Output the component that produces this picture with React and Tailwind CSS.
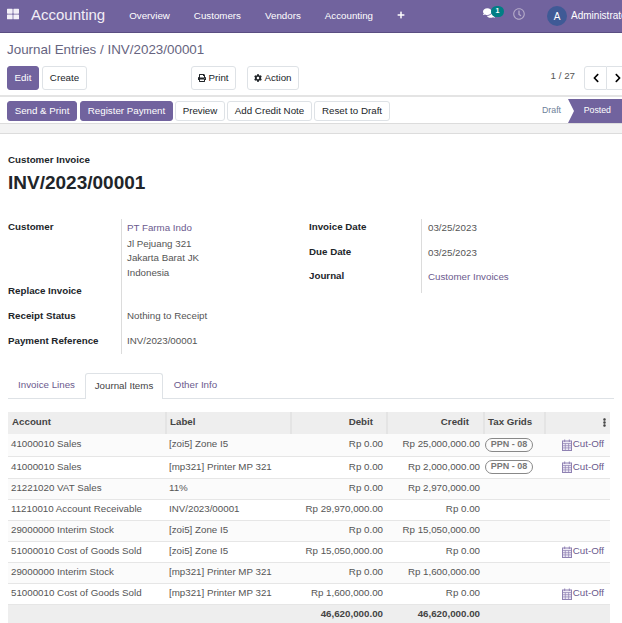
import React from "react";
import { FaPrint, FaCog, FaComments, FaRegClock, FaPlus, FaThLarge, FaChevronLeft, FaChevronRight, FaEllipsisV } from "react-icons/fa";

const Btn = ({ children, primary, className = "" }) => (
  <button className={`flex items-center justify-center shrink-0 whitespace-nowrap rounded-[3px] border text-[9.75px] ${primary ? "bg-[#71639e] border-[#71639e] text-white" : "bg-white border-[#dee2e6] text-[#212529]"} ${className}`}>
    {children}
  </button>
);

const Cal = () => (
  <svg viewBox="0 0 10 12" className="w-[10px] h-[12px] mr-[1px] shrink-0" fill="none" stroke="#8f82b3" strokeWidth="1">
    <rect x="0.5" y="2" width="9" height="9.5" fill="#eeeaf5" />
    <path d="M0 4.5h10M0 6.7h10M0 8.9h10M3.3 4.5v7M6.6 4.5v7" strokeWidth="0.7" />
    <path d="M2.7 0.5v2.5M7.3 0.5v2.5" />
  </svg>
);

const rows = [
  ["41000010 Sales", "[zoi5] Zone I5", "Rp 0.00", "Rp 25,000,000.00", true, true, "h-[22px]"],
  ["41000010 Sales", "[mp321] Printer MP 321", "Rp 0.00", "Rp 2,000,000.00", true, true, "h-[22px]"],
  ["21221020 VAT Sales", "11%", "Rp 0.00", "Rp 2,970,000.00", false, false, "h-[21px]"],
  ["11210010 Account Receivable", "INV/2023/00001", "Rp 29,970,000.00", "Rp 0.00", false, false, "h-[21px]"],
  ["29000000 Interim Stock", "[zoi5] Zone I5", "Rp 0.00", "Rp 15,050,000.00", false, false, "h-[21px]"],
  ["51000010 Cost of Goods Sold", "[zoi5] Zone I5", "Rp 15,050,000.00", "Rp 0.00", false, true, "h-[21px]"],
  ["29000000 Interim Stock", "[mp321] Printer MP 321", "Rp 0.00", "Rp 1,600,000.00", false, false, "h-[21px]"],
  ["51000010 Cost of Goods Sold", "[mp321] Printer MP 321", "Rp 1,600,000.00", "Rp 0.00", false, true, "h-[21px]"],
];

const Label = ({ children, className = "" }) => (
  <div className={`font-bold text-[9.75px] text-[#212529] ${className}`}>{children}</div>
);

export default function App() {
  return (
    <div className="w-[622px] h-[623px] overflow-hidden bg-white text-[9.75px] text-[#4c4c4c] [font-family:Liberation_Sans,Arial,sans-serif]">
      <nav className="h-[33px] bg-[#71639e] border-b border-[#5a4e82] flex items-center text-white whitespace-nowrap">
        <FaThLarge className="ml-[7px] mb-[5px] w-[12px] h-[12px] shrink-0 text-[#f3f0f8]" />
        <span className="ml-[12px] mb-[1px] text-[15px] text-[#f1eef6]">Accounting</span>
        <span className="ml-[24px] text-[9.75px]">Overview</span>
        <span className="ml-[24px] text-[9.75px]">Customers</span>
        <span className="ml-[24px] text-[9.75px]">Vendors</span>
        <span className="ml-[24px] text-[9.75px]">Accounting</span>
        <FaPlus className="ml-[24px] mb-[3px] w-[8px] h-[8px] shrink-0" />
        <div className="relative ml-[78px] mb-[6px] shrink-0">
          <FaComments className="w-[12px] h-[12px]" />
          <span className="absolute left-[8px] top-[-1px] w-[13px] h-[11px] rounded-full bg-[#017e84] text-[7px] font-bold flex items-center justify-center">1</span>
        </div>
        <FaRegClock className="ml-[18px] mb-[5px] w-[12px] h-[12px] shrink-0 text-[#b5abc9]" />
        <span className="ml-[22px] w-[20px] h-[20px] shrink-0 rounded-full bg-[#3f5a96] flex items-center justify-center text-[10px]">A</span>
        <span className="ml-[4px] mb-[2px] text-[10px] whitespace-nowrap">Administrator</span>
      </nav>

      <div className="h-[64px] px-[7px] border-b-2 border-[#e4e4e4]">
        <div className="h-[33px] flex items-center text-[13.4px] leading-none text-[#666480]">Journal Entries / INV/2023/00001</div>
        <div className="flex items-center">
          <Btn primary className="w-[32px] h-[24px]">Edit</Btn>
          <Btn className="ml-[3px] w-[45px] h-[24px]">Create</Btn>
          <Btn className="ml-[104px] w-[45px] h-[24px] gap-[2px]"><FaPrint className="w-[8px] h-[8px]" />Print</Btn>
          <Btn className="ml-[11px] w-[52px] h-[24px] gap-[2px]"><FaCog className="w-[8px] h-[8px]" />Action</Btn>
          <span className="ml-auto mr-[9px] mb-[3px] text-[9.75px] text-[#555]">1 / 27</span>
          <div className="flex mr-[-15px]">
            <Btn className="w-[23px] h-[24px] rounded-r-none"><FaChevronLeft className="w-[10px] h-[10px] text-black" /></Btn>
            <Btn className="w-[23px] h-[24px] rounded-l-none border-l-0"><FaChevronRight className="w-[10px] h-[10px] text-black" /></Btn>
          </div>
        </div>
      </div>

      <div className="h-[27px] pt-[2px] pl-[7px] flex items-center border-b border-[#dcdcdc]">
        <Btn primary className="w-[70px] h-[20px]">Send &amp; Print</Btn>
        <Btn primary className="ml-[3px] w-[93px] h-[20px]">Register Payment</Btn>
        <Btn className="ml-[2px] w-[50px] h-[20px]">Preview</Btn>
        <Btn className="ml-[2px] w-[85px] h-[20px]">Add Credit Note</Btn>
        <Btn className="ml-[2px] w-[76px] h-[20px]">Reset to Draft</Btn>
        <span className="ml-auto mr-[7px] text-[8.75px] text-[#6d7f99]">Draft</span>
        <div className="w-[54px] h-[24px] bg-[#71639e] text-white text-[8.75px] flex items-center justify-end pr-[11px] [clip-path:polygon(0_0,100%_0,100%_100%,0_100%,6px_50%)]">Posted</div>
      </div>

      <div className="h-[10px] bg-[#f3f3f3] border-b border-[#dcdcdc]" />

      <div className="px-[8px]">
        <Label className="mt-[19px] leading-[13px]">Customer Invoice</Label>
        <h1 className="mt-[5px] text-[19px] leading-[24px] font-bold text-[#212529]">INV/2023/00001</h1>

        <div className="mt-[24px] flex">
          <div className="w-[113px] shrink-0">
            <Label className="h-[64px] leading-[15px]">Customer</Label>
            <Label className="h-[25px] leading-[15px]">Replace Invoice</Label>
            <Label className="h-[25px] leading-[15px]">Receipt Status</Label>
            <Label className="h-[25px] leading-[15px]">Payment Reference</Label>
          </div>
          <div className="w-[188px] shrink-0 h-[135px] border-l border-[#dcdcdc] pl-[5px] text-[#555]">
            <div className="leading-[15px] pt-[1px] text-[#6b5a8e]">PT Farma Indo</div>
            <div className="leading-[15px] mt-[1px]">Jl Pejuang 321</div>
            <div className="leading-[14px]">Jakarta Barat JK</div>
            <div className="leading-[15px]">Indonesia</div>
            <div className="mt-[28px] leading-[15px]">Nothing to Receipt</div>
            <div className="mt-[10px] leading-[15px]">INV/2023/00001</div>
          </div>
          <div className="w-[112px] shrink-0">
            <Label className="h-[25px] leading-[15px]">Invoice Date</Label>
            <Label className="h-[24px] leading-[15px]">Due Date</Label>
            <Label className="leading-[15px]">Journal</Label>
          </div>
          <div className="h-[74px] border-l border-[#dcdcdc] pl-[6px] text-[#555]">
            <div className="h-[25px] leading-[15px] pt-[1px]">03/25/2023</div>
            <div className="h-[24px] leading-[15px] pt-[1px]">03/25/2023</div>
            <div className="leading-[15px] pt-[1px] text-[#6b5a8e]">Customer Invoices</div>
          </div>
        </div>

        <div className="mt-[15px] h-[26px] flex items-end border-b border-[#dee2e6] text-[9.75px]">
          <span className="w-[77px] h-[25px] flex items-center justify-center text-[#6b5a8e]">Invoice Lines</span>
          <span className="w-[78px] h-[26px] mb-[-1px] flex items-center justify-center bg-white border border-b-0 border-[#dee2e6] rounded-t-[3px] text-[#444]">Journal Items</span>
          <span className="w-[65px] h-[25px] flex items-center justify-center text-[#6b5a8e]">Other Info</span>
        </div>

        <table className="mt-[13px] w-[602px] table-fixed border-collapse text-[9.75px]">
          <colgroup>
            <col className="w-[158px]" /><col className="w-[125px]" /><col className="w-[96px]" /><col className="w-[97px]" /><col className="w-[61px]" /><col className="w-[65px]" />
          </colgroup>
          <thead>
            <tr className="h-[22px] bg-[#eeeeee] font-bold text-[#444]">
              <th className="px-[4px] pb-[2px] text-left border-r-2 border-[#e4e4e4] font-bold">Account</th>
              <th className="px-[3px] pb-[2px] text-left border-r-2 border-[#e4e4e4] font-bold">Label</th>
              <th className="pr-[13px] pb-[2px] text-right border-r-2 border-[#e4e4e4] font-bold">Debit</th>
              <th className="pr-[14px] pb-[2px] text-right border-r-2 border-[#e4e4e4] font-bold">Credit</th>
              <th className="pl-[3px] pb-[2px] text-left border-r-2 border-[#e4e4e4] font-bold whitespace-nowrap">Tax Grids</th>
              <th className="pr-[1px] pb-[2px] text-right"><FaEllipsisV className="ml-auto w-[9px] h-[9px] text-[#444]" /></th>
            </tr>
          </thead>
          <tbody>
            {rows.map((r, i) => (
              <tr key={i} className={`${r[6]} border-b border-[#e6e6e6] ${i % 2 === 0 ? "bg-[#fbfbfb]" : "bg-white"} text-[#555]`}>
                <td className="pl-[3px] whitespace-nowrap">{r[0]}</td>
                <td className="pl-[3px] whitespace-nowrap">{r[1]}</td>
                <td className="pr-[4px] text-right whitespace-nowrap">{r[2]}</td>
                <td className="pr-[4px] text-right whitespace-nowrap">{r[3]}</td>
                <td className="pl-[1px]">
                  {r[4] && <span className="block w-[48px] h-[14px] leading-[11px] rounded-full border border-[#888] text-center text-[9px] font-bold text-[#777] whitespace-nowrap">PPN - 08</span>}
                </td>
                <td className="pr-[6px]">
                  {r[5] && <span className="flex items-center justify-end text-[#6b5a8e] whitespace-nowrap"><Cal />Cut-Off</span>}
                </td>
              </tr>
            ))}
            <tr className="h-[20px] bg-[#eeeeee] font-bold text-[#444]">
              <td /><td />
              <td className="pr-[4px] pt-[1px] text-right">46,620,000.00</td>
              <td className="pr-[4px] pt-[1px] text-right">46,620,000.00</td>
              <td /><td />
            </tr>
          </tbody>
        </table>
      </div>
    </div>
  );
}
